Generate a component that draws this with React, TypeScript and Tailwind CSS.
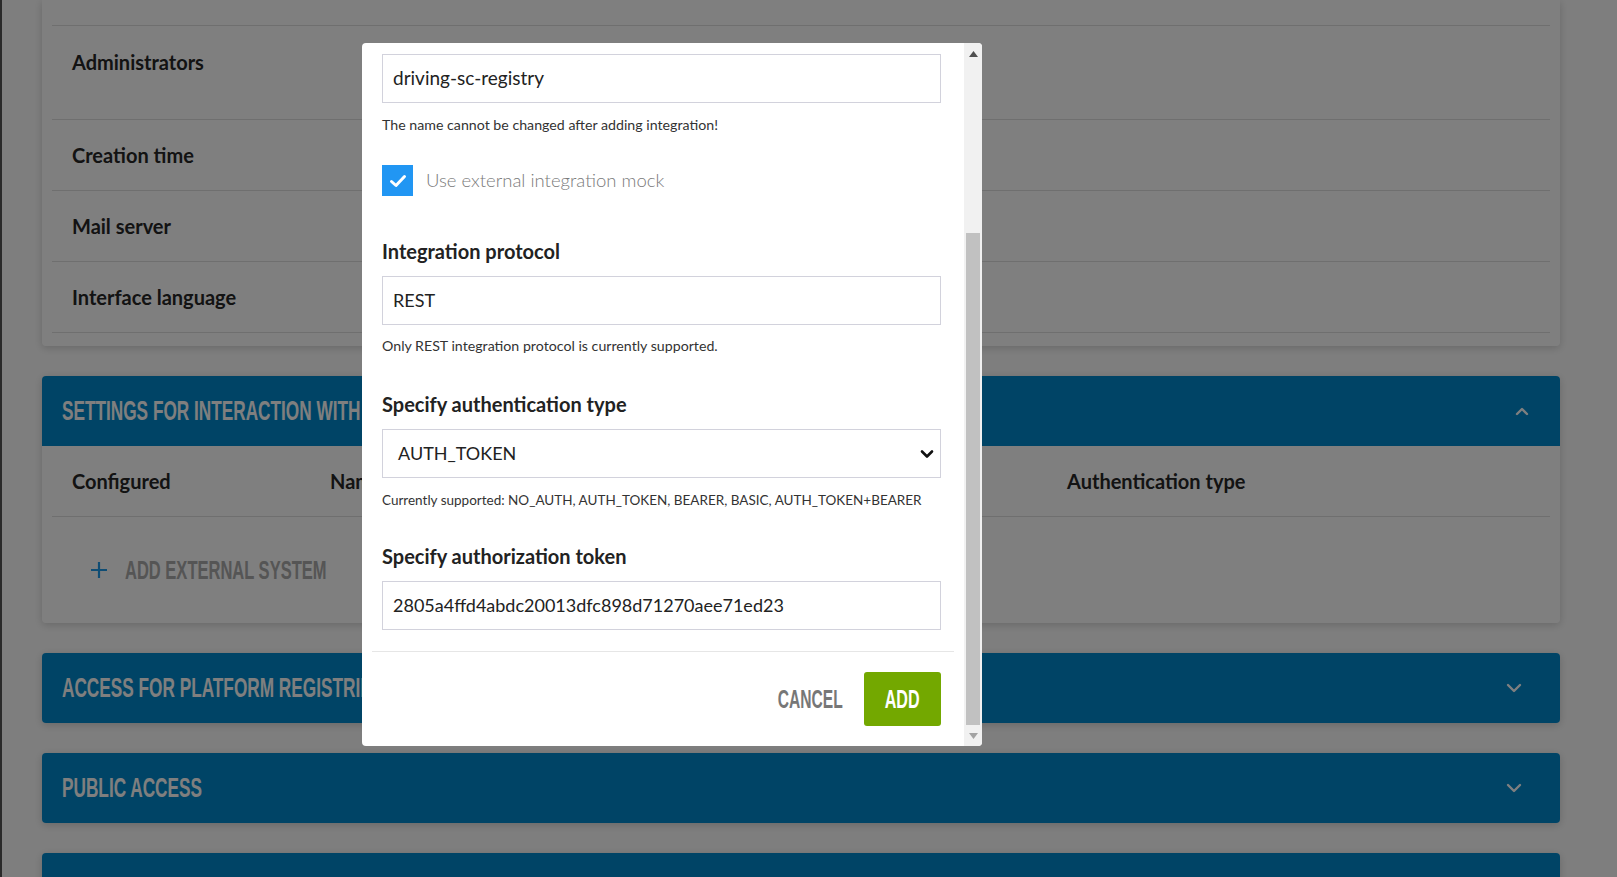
import React from 'react';

const body = "[font-family:Lato,'Liberation_Sans',sans-serif]";
const cond = "[font-family:'Liberation_Sans',Arial,sans-serif] font-bold";

function Condensed({ text, wide = false, className = '' }: { text: string; wide?: boolean; className?: string }) {
  return (
    <span
      className={`${cond} inline-block whitespace-nowrap origin-left ${wide ? '[transform:scaleX(0.635)]' : '[transform:scaleX(0.615)]'} ${className}`}
    >
      {text}
    </span>
  );
}

function Chevron({ up = false }: { up?: boolean }) {
  return (
    <svg width="16" height="10" viewBox="0 0 16 10" fill="none" className="text-white">
      <polyline
        points={up ? '3,8 8,3 13,8' : '2,2 8,8 14,2'}
        stroke="currentColor"
        strokeWidth="2.4"
        strokeLinecap="round"
        strokeLinejoin="round"
      />
    </svg>
  );
}

function SectionHeader({ title, up = false, rounded = 'rounded-[4px]' }: { title?: string; up?: boolean; rounded?: string }) {
  return (
    <div
      className={`h-[70px] bg-[#0088cc] ${rounded} flex items-center justify-between pl-[20px] ${up ? 'pr-[30px]' : 'pr-[38px]'}`}
    >
      {title ? <Condensed text={title} className="text-[28px] text-white" /> : <span />}
      <Chevron up={up} />
    </div>
  );
}

function InfoRow({ label, tall = false }: { label: string; tall?: boolean }) {
  return (
    <div
      className={`border-b border-[#dedede] pl-[20px] flex ${tall ? 'h-[94px] items-start pt-[23px]' : 'h-[71px] items-center'}`}
    >
      <span className="text-[20px] leading-[26px] font-bold text-[#262626]">{label}</span>
    </div>
  );
}

function Field({ children, className = '' }: { children: React.ReactNode; className?: string }) {
  return (
    <div className={`h-[49px] border border-[#d2d2dc] flex items-center px-[10px] text-[18px] text-[#222] ${className}`}>
      {children}
    </div>
  );
}

function Label({ children, className = '' }: { children: React.ReactNode; className?: string }) {
  return <div className={`text-[20px] leading-[26px] font-bold text-[#222] ${className}`}>{children}</div>;
}

function Help({ children, className = '' }: { children: React.ReactNode; className?: string }) {
  return <div className={`leading-[20px] text-[#333] ${className}`}>{children}</div>;
}

function Modal() {
  return (
    <div className="absolute left-[362px] top-[43px] w-[620px] h-[703px] bg-white rounded-[4px] overflow-hidden flex">
      <div className="flex-1 flex flex-col pt-[11px]">
        <div className="pl-[20px] pr-[23px] flex flex-col">
          <Field className="text-[19px]">driving-sc-registry</Field>
          <Help className="mt-[12px] text-[14.2px]">The name cannot be changed after adding integration!</Help>

          <div className="mt-[30px] flex items-center gap-[13px]">
            <div className="w-[31px] h-[31px] bg-[#2196f3] flex items-center justify-center">
              <svg width="18" height="14" viewBox="0 0 18 14" fill="none">
                <polyline points="2.5,7.5 7,11.5 15.5,2.5" stroke="white" strokeWidth="3" strokeLinecap="round" strokeLinejoin="round" />
              </svg>
            </div>
            <span className="text-[18.5px] font-light text-[#7a7a7a]">Use external integration mock</span>
          </div>

          <Label className="mt-[42px]">Integration protocol</Label>
          <div className="mt-[12px]">
            <Field>REST</Field>
          </div>
          <Help className="mt-[11px] text-[14.2px]">Only REST integration protocol is currently supported.</Help>

          <Label className="mt-[35px]">Specify authentication type</Label>
          <div className="mt-[12px] h-[49px] border border-[#d2d2dc] flex items-center justify-between pl-[15px] pr-[6px] text-[18px] text-[#222]">
            <span>AUTH_TOKEN</span>
            <svg width="14" height="10" viewBox="0 0 14 10" fill="none">
              <polyline points="2,2.5 7,7.5 12,2.5" stroke="#111" strokeWidth="2.6" strokeLinecap="round" strokeLinejoin="round" />
            </svg>
          </div>
          <Help className="mt-[12px] text-[13.5px]">Currently supported: NO_AUTH, AUTH_TOKEN, BEARER, BASIC, AUTH_TOKEN+BEARER</Help>

          <Label className="mt-[33px]">Specify authorization token</Label>
          <div className="mt-[12px]">
            <Field>2805a4ffd4abdc20013dfc898d71270aee71ed23</Field>
          </div>
        </div>

        <div className="mt-[21px] mx-[10px] border-t border-[#e6e6e6]" />

        <div className="mt-[20px] pr-[23px] flex justify-end items-center">
          <div className="w-[67px] flex justify-center mr-[20px]">
            <span className={`${cond} inline-block whitespace-nowrap origin-center [transform:scaleX(0.6)] text-[26px] text-[#777]`}>
              CANCEL
            </span>
          </div>
          <div className="w-[77px] h-[54px] bg-[#73a800] rounded-[3px] flex items-center justify-center">
            <span className={`${cond} inline-block whitespace-nowrap origin-center [transform:scaleX(0.62)] text-[26px] text-white`}>
              ADD
            </span>
          </div>
        </div>
      </div>

      {/* scrollbar */}
      <div className="w-[18px] bg-[#f1f1f1] flex flex-col items-center">
        <div className="h-[22px] flex items-center justify-center">
          <svg width="9" height="6" viewBox="0 0 9 6">
            <polygon points="0,6 4.5,0 9,6" fill="#505050" />
          </svg>
        </div>
        <div className="h-[168px]" />
        <div className="w-[14px] h-[492px] bg-[#c1c1c1]" />
        <div className="flex-1 flex items-center justify-center">
          <svg width="9" height="6" viewBox="0 0 9 6">
            <polygon points="0,0 4.5,6 9,0" fill="#a3a3a3" />
          </svg>
        </div>
      </div>
    </div>
  );
}

export default function App() {
  return (
    <div className={`relative w-full h-[877px] overflow-hidden bg-[#fdfdfd] flex ${body}`}>
      <div className="w-[2px] bg-[#555]" />
      <div className="flex-1 pl-[40px] pr-[57px] flex flex-col gap-[30px]">
        {/* general info card */}
        <div className="bg-white rounded-b-[4px] shadow-[0_2px_8px_rgba(0,0,0,0.18)] px-[10px] pb-[13px]">
          <div className="h-[26px] border-b border-[#dedede]" />
          <InfoRow label="Administrators" tall />
          <InfoRow label="Creation time" />
          <InfoRow label="Mail server" />
          <InfoRow label="Interface language" />
        </div>

        {/* external systems */}
        <div className="bg-white rounded-[4px] shadow-[0_2px_8px_rgba(0,0,0,0.18)]">
          <SectionHeader title="SETTINGS FOR INTERACTION WITH EXTERNAL SYSTEMS" up rounded="rounded-t-[4px]" />
          <div className="px-[10px]">
            <div className="h-[71px] border-b border-[#dedede] flex items-center pl-[20px] text-[20px] font-bold text-[#262626]">
              <span className="w-[258px]">Configured</span>
              <span className="w-[737px]">Name</span>
              <span>Authentication type</span>
            </div>
            <div className="h-[106px] flex items-center pl-[38px] gap-[17px]">
              <svg width="18" height="18" viewBox="0 0 18 18" fill="none">
                <path d="M9 1v16M1 9h16" stroke="#1e9be9" strokeWidth="2.2" />
              </svg>
              <Condensed text="ADD EXTERNAL SYSTEM" wide className="text-[26px] text-[#aaa]" />
            </div>
          </div>
        </div>

        <div className="shadow-[0_2px_8px_rgba(0,0,0,0.18)] rounded-[4px]">
          <SectionHeader title="ACCESS FOR PLATFORM REGISTRIES" />
        </div>
        <div className="shadow-[0_2px_8px_rgba(0,0,0,0.18)] rounded-[4px]">
          <SectionHeader title="PUBLIC ACCESS" />
        </div>
        <div className="shadow-[0_2px_8px_rgba(0,0,0,0.18)] rounded-[4px]">
          <SectionHeader />
        </div>
      </div>

      {/* dim overlay */}
      <div className="absolute inset-0 bg-black/50" />
      <Modal />
    </div>
  );
}
